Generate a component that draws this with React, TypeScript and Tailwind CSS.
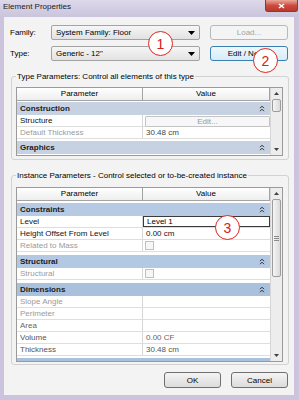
import React from "react";

const DownTri = ({ c = "#000" }: { c?: string }) => (
  <svg width="7" height="4" viewBox="0 0 7 4">
    <path d="M0 0h7L3.5 4z" fill={c} />
  </svg>
);
const UpTri = ({ c = "#404040" }: { c?: string }) => (
  <svg width="5" height="3" viewBox="0 0 5 3">
    <path d="M0 3h5L2.5 0z" fill={c} />
  </svg>
);
const SmallDown = ({ c = "#404040" }: { c?: string }) => (
  <svg width="5" height="3" viewBox="0 0 5 3">
    <path d="M0 0h5L2.5 3z" fill={c} />
  </svg>
);
const Chevrons = () => (
  <svg width="6" height="7" viewBox="0 0 6 7">
    <path d="M1 3.2L3 1.2 5 3.2M1 6.2L3 4.2 5 6.2" stroke="#2d2d2d" strokeWidth="1" fill="none" />
  </svg>
);

function Combo({ text }: { text: string }) {
  return (
    <div className="w-[149px] h-[15px] border border-[#a3a3a3] rounded-[2px] bg-gradient-to-b from-[#f6f6f6] to-[#e2e2e2] flex items-center justify-between pl-[4px] pr-[4px]">
      <span className="leading-[11px]">{text}</span>
      <DownTri />
    </div>
  );
}

function Category({ name, bg, mt }: { name: string; bg: string; mt: string }) {
  return (
    <div className={`h-[13px] shrink-0 ${mt} ${bg} flex items-center justify-between pl-[3px] pr-[5px] font-bold text-[#1b1b1b]`}>
      <span className="leading-[12px]">{name}</span>
      <Chevrons />
    </div>
  );
}

function Item({ name, gray, children }: { name: string; gray?: string; children?: React.ReactNode }) {
  return (
    <div className="h-[12px] shrink-0 grid grid-cols-[126px_1fr] border-b border-[#dedede] bg-white">
      <div className={`pl-[3px] border-r border-[#d6d6d6] leading-[11px] ${gray ?? "text-[#111]"}`}>{name}</div>
      <div className="flex items-stretch">{children}</div>
    </div>
  );
}

function Header() {
  return (
    <div className="h-[13px] shrink-0 grid grid-cols-[126px_1fr] border-b border-[#a3a3a3] bg-gradient-to-b from-white to-[#eeeeee]">
      <div className="text-center leading-[12px] border-r border-[#a3a3a3]">Parameter</div>
      <div className="text-center leading-[12px] border-r border-[#a3a3a3]">Value</div>
    </div>
  );
}

function Scroll({ thumbH, grip }: { thumbH: string; grip?: boolean }) {
  return (
    <div className="w-[12px] border-l border-[#d6d6d6] bg-[#ededed] flex flex-col">
      <div className="h-[11px] flex items-center justify-center">
        <UpTri />
      </div>
      <div className={`mx-[1px] ${thumbH} border border-[#9c9c9c] rounded-[2px] bg-gradient-to-r from-[#f6f6f6] to-[#dadada] flex flex-col items-center justify-center gap-[1px]`}>
        {grip && (
          <>
            <div className="w-[5px] h-px bg-[#8a8a8a]" />
            <div className="w-[5px] h-px bg-[#8a8a8a]" />
            <div className="w-[5px] h-px bg-[#8a8a8a]" />
          </>
        )}
      </div>
      <div className="flex-1" />
      <div className="h-[11px] flex items-center justify-center">
        <SmallDown />
      </div>
    </div>
  );
}

const Checkbox = () => <div className="ml-[2px] mt-[1px] w-[9px] h-[9px] border border-[#c0c0c0] bg-[#f6f6f6]" />;
const Val = ({ t, c = "text-[#111]" }: { t: string; c?: string }) => (
  <span className={`pl-[3px] leading-[11px] ${c}`}>{t}</span>
);

function Circle({ n, cls }: { n: string; cls: string }) {
  return (
    <div className={`absolute ${cls} w-[25px] h-[25px] rounded-full border-[1.5px] border-[#e0241d] bg-white flex items-center justify-center text-[#d8201a] text-[14px] leading-[14px]`}>
      {n}
    </div>
  );
}

export default function App() {
  return (
    <div className="relative w-[299px] h-[400px] bg-[#cbc4dc] font-['Liberation_Sans',Arial,sans-serif] text-[8px] leading-[11px] text-black overflow-hidden flex flex-col">
      {/* title bar */}
      <div className="h-[17px] flex justify-between items-start bg-gradient-to-b from-[#ddd8ea] to-[#cbc4dc]">
        <span className="pl-[3px] pt-[1px] text-[#1a1a1a]">Element Properties</span>
        <div className="mr-[1px] w-[33px] h-[12px] rounded-b-[3px] border border-t-0 border-[#8a3a30] bg-gradient-to-b from-[#e9a79a] via-[#cc4b3d] to-[#b8392d] flex items-center justify-center">
          <svg width="7" height="6" viewBox="0 0 7 6">
            <path d="M1 1l5 4M6 1l-5 4" stroke="#fff" strokeWidth="1.6" />
          </svg>
        </div>
      </div>

      {/* client area */}
      <div className="ml-[4px] w-[290px] h-[378px] bg-[#f3f3f3] flex flex-col">
        <div className="pt-[8px] pl-[6px] flex flex-col gap-[6px]">
          <div className="flex items-center h-[15px]">
            <span className="w-[41px]">Family:</span>
            <Combo text="System Family: Floor" />
            <div className="ml-[10px] w-[78px] h-[15px] border border-[#b5b9bc] rounded-[3px] bg-[#f4f4f4] text-[#a3a3a3] flex items-center justify-center">
              Load...
            </div>
          </div>
          <div className="flex items-center h-[15px]">
            <span className="w-[41px]">Type:</span>
            <Combo text={'Generic - 12"'} />
            <div className="ml-[10px] w-[78px] h-[15px] border border-[#3c7fb1] rounded-[3px] bg-gradient-to-b from-[#eef7fd] to-[#d6ecf9] flex items-center justify-center">
              Edit / New...
            </div>
          </div>
        </div>

        {/* Type parameters */}
        <fieldset className="mt-[10px] ml-[7px] w-[278px] border border-[#d2d2d2] rounded-[3px] pl-[4px] pr-[5px] pt-[5px] pb-[3px]">
          <legend className="px-[1px] leading-[11px]">Type Parameters: Control all elements of this type</legend>
          <div className="h-[69px] flex border border-[#9a9a9a] bg-white">
            <div className="flex-1 overflow-hidden flex flex-col">
              <Header />
              <Category name="Construction" bg="bg-[#c6d2e1]" mt="mt-[1px]" />
              <Item name="Structure">
                <div className="ml-[2px] my-[0.5px] flex-1 border border-[#c4c4c4] rounded-[1px] bg-[#f7f7f7] text-[#9a9a9a] text-center leading-[9px]">
                  Edit...
                </div>
              </Item>
              <Item name="Default Thickness" gray="text-[#9a9a9a]">
                <Val t="30.48 cm" c="text-[#444]" />
              </Item>
              <Category name="Graphics" bg="bg-[#c6d2e1]" mt="mt-[2px]" />
            </div>
            <Scroll thumbH="h-[13px]" />
          </div>
        </fieldset>

        {/* Instance parameters */}
        <fieldset className="mt-[10px] ml-[7px] w-[278px] border border-[#d2d2d2] rounded-[3px] pl-[4px] pr-[5px] pt-[6px] pb-[2px]">
          <legend className="px-[1px] leading-[11px]">Instance Parameters - Control selected or to-be-created instance</legend>
          <div className="h-[175px] flex border border-[#9a9a9a] bg-white">
            <div className="flex-1 overflow-hidden flex flex-col">
              <Header />
              <Category name="Constraints" bg="bg-[#b6cae3]" mt="mt-[2px]" />
              <Item name="Level">
                <div className="flex-1 border border-[#3a3a3a] bg-white leading-[9px] pl-[3px]">Level 1</div>
              </Item>
              <Item name="Height Offset From Level">
                <Val t="0.00 cm" />
              </Item>
              <Item name="Related to Mass" gray="text-[#9a9a9a]">
                <Checkbox />
              </Item>
              <Category name="Structural" bg="bg-[#b3c8e2]" mt="mt-[3px]" />
              <Item name="Structural" gray="text-[#9a9a9a]">
                <Checkbox />
              </Item>
              <Category name="Dimensions" bg="bg-[#aac1de]" mt="mt-[3px]" />
              <Item name="Slope Angle" gray="text-[#9a9a9a]" />
              <Item name="Perimeter" gray="text-[#9a9a9a]" />
              <Item name="Area" gray="text-[#666]" />
              <Item name="Volume" gray="text-[#555]">
                <Val t="0.00 CF" c="text-[#666]" />
              </Item>
              <Item name="Thickness" gray="text-[#555]">
                <Val t="30.48 cm" c="text-[#555]" />
              </Item>
              <Category name="Identity Data" bg="bg-[#aac1de]" mt="mt-[2px]" />
            </div>
            <Scroll thumbH="h-[78px]" grip />
          </div>
        </fieldset>

        {/* buttons */}
        <div className="mt-[7px] pr-[6px] flex justify-end gap-[10px]">
          <div className="w-[57px] h-[16px] border border-[#707070] rounded-[3px] bg-gradient-to-b from-[#f4f4f4] to-[#dcdcdc] flex items-center justify-center">
            OK
          </div>
          <div className="w-[57px] h-[16px] border border-[#707070] rounded-[3px] bg-gradient-to-b from-[#f4f4f4] to-[#dcdcdc] flex items-center justify-center">
            Cancel
          </div>
        </div>
      </div>

      <Circle n="1" cls="left-[148px] top-[31px]" />
      <Circle n="2" cls="left-[253px] top-[48px]" />
      <Circle n="3" cls="left-[215px] top-[215px]" />
    </div>
  );
}
